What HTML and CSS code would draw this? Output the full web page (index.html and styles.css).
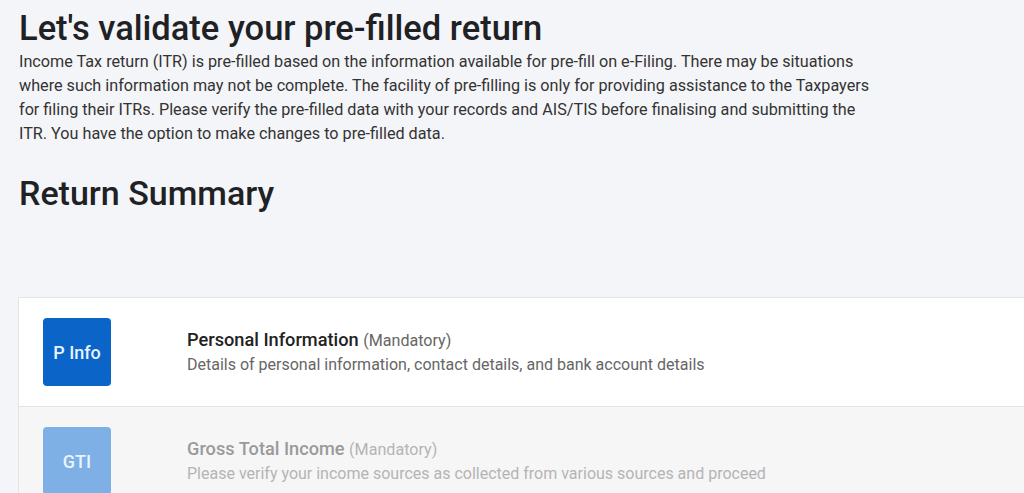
FILE: index.html
```html
<!DOCTYPE html>
<html lang="en">
<head>
    <meta charset="UTF-8">
    <meta name="viewport" content="width=device-width, initial-scale=1.0">
    <title>Validate Pre-filled Return</title>
    <link rel="stylesheet" href="styles.css">
</head>
<body>

    <div class="page">
        <h1 class="title">Let's validate your pre-filled return</h1>
        <p class="intro">
            Income Tax return (ITR) is pre-filled based on the information available for pre-fill on e-Filing. There may be situations
            where such information may not be complete. The facility of pre-filling is only for providing assistance to the Taxpayers
            for filing their ITRs. Please verify the pre-filled data with your records and AIS/TIS before finalising and submitting the
            ITR. You have the option to make changes to pre-filled data.
        </p>

        <h2 class="section-title">Return Summary</h2>

        <!-- Summary sections -->
        <div class="summary">
            <div class="summary-row active">
                <div class="badge">P Info</div>
                <div class="row-text">
                    <div class="row-title">Personal Information <span class="mandatory">(Mandatory)</span></div>
                    <div class="row-desc">Details of personal information, contact details, and bank account details</div>
                </div>
            </div>
            <div class="summary-row disabled">
                <div class="badge">GTI</div>
                <div class="row-text">
                    <div class="row-title">Gross Total Income <span class="mandatory">(Mandatory)</span></div>
                    <div class="row-desc">Please verify your income sources as collected from various sources and proceed</div>
                </div>
            </div>
        </div>
    </div>

</body>
</html>
```

FILE: styles.css
```css
body {
    margin: 0;
    font-family: Roboto, "Liberation Sans", sans-serif;
    background-color: #f4f5f8;
    color: #222;
    overflow: hidden;
}
.page {
    padding: 7px 0 0 19px;
}
.title {
    margin: 0;
    font-size: 34.5px;
    font-weight: 500;
    line-height: 43px;
    color: #202124;
}
.intro {
    margin: 0;
    width: 860px;
    font-size: 16.2px;
    line-height: 24px;
    color: #333;
}
.section-title {
    margin: 26px 0 0;
    font-size: 34px;
    font-weight: 500;
    line-height: 42px;
    color: #202124;
}
.summary {
    margin: 83px 0 0 -1px;
    border: 1px solid #e3e4e6;
    border-right: none;
    background-color: white;
}
.summary-row {
    display: flex;
    align-items: center;
    height: 108px;
    padding-left: 24px;
}
.summary-row + .summary-row {
    border-top: 1px solid #e3e4e6;
}
.badge {
    width: 68px;
    height: 68px;
    border-radius: 4px;
    background-color: #0b65c8;
    color: #e8f4ff;
    font-size: 18px;
    font-weight: 500;
    display: flex;
    align-items: center;
    justify-content: center;
    flex-shrink: 0;
}
.row-text {
    margin-left: 76px;
}
.row-title {
    font-size: 18.2px;
    font-weight: 500;
    line-height: 24px;
    color: #222;
}
.mandatory {
    font-size: 16.1px;
    font-weight: 400;
    color: #666;
}
.row-desc {
    font-size: 16px;
    line-height: 24px;
    color: #666;
}
.summary-row.disabled {
    background-color: #f6f6f7;
}
.summary-row.disabled .badge {
    background-color: #7eb0e6;
}
.summary-row.disabled .row-title {
    color: #9a9a9a;
}
.summary-row.disabled .mandatory,
.summary-row.disabled .row-desc {
    color: #b4b4b4;
}
```
